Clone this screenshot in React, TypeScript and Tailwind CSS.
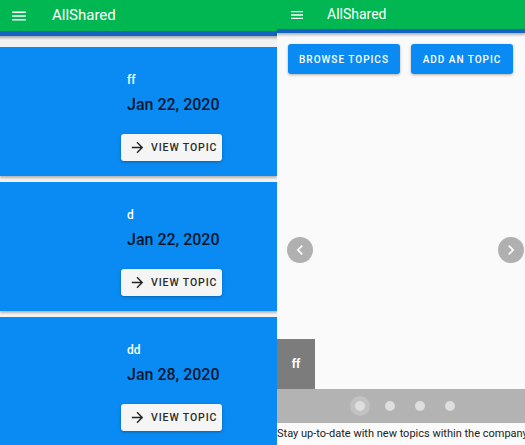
import React from 'react';

const topics = [
  { title: 'ff', date: 'Jan 22, 2020' },
  { title: 'd', date: 'Jan 22, 2020' },
  { title: 'dd', date: 'Jan 28, 2020' },
];

function MenuIcon({ size }: { size: number }) {
  return (
    <svg width={size} height={size} viewBox="0 0 24 24" fill="white">
      <path d="M3 18h18v-2H3v2zm0-5h18v-2H3v2zm0-7v2h18V6H3z" />
    </svg>
  );
}

function ArrowIcon() {
  return (
    <svg width="17" height="17" viewBox="0 0 24 24" fill="#222">
      <path d="M12 4l-1.41 1.41L16.17 11H4v2h12.17l-5.58 5.59L12 20l8-8z" />
    </svg>
  );
}

function TopicCard({ title, date }: { title: string; date: string }) {
  return (
    <div className="h-[129px] shrink-0 bg-[#0a8bf3] shadow-[0_2px_2px_rgba(0,0,0,0.25)] pl-[121px] pt-[25px]">
      <div className="pl-[6px] text-[12px] leading-[16px] font-medium text-white">{title}</div>
      <div className="pl-[6px] mt-[5px] text-[16px] leading-[24px] font-medium text-black/85">{date}</div>
      <button className="mt-[17px] flex h-[27px] w-[101px] items-center gap-[5px] rounded-[3px] bg-[#f5f5f5] pl-[8px] shadow-[0_1px_3px_rgba(0,0,0,0.3)]">
        <ArrowIcon />
        <span className="text-[10.5px] font-medium tracking-[0.9px] text-[#2a2a2a]">VIEW TOPIC</span>
      </button>
    </div>
  );
}

function Chevron({ dir }: { dir: 'left' | 'right' }) {
  return (
    <div className="flex h-[26px] w-[26px] items-center justify-center rounded-full bg-[#b0b0b0]">
      <svg width="20" height="20" viewBox="0 0 24 24" fill="white">
        {dir === 'left' ? (
          <path d="M15.41 7.41L14 6l-6 6 6 6 1.41-1.41L10.83 12z" />
        ) : (
          <path d="M10 6L8.59 7.41 13.17 12l-4.58 4.59L10 18l6-6z" />
        )}
      </svg>
    </div>
  );
}

function Dot({ active }: { active?: boolean }) {
  return (
    <div
      className={
        active
          ? 'flex h-[20px] w-[20px] items-center justify-center rounded-full bg-white/20'
          : 'flex h-[20px] w-[20px] items-center justify-center'
      }
    >
      <div className="h-[10px] w-[10px] rounded-full bg-[#dedede]" />
    </div>
  );
}

export default function App() {
  return (
    <div className="flex h-[445px] w-[525px] overflow-hidden bg-[#f2f2f2] font-['Roboto',sans-serif]">
      {/* Left: topic list */}
      <div className="flex w-[277px] shrink-0 flex-col overflow-hidden">
        <div className="flex h-[31px] shrink-0 items-center bg-[#00b751] pl-[10px]">
          <MenuIcon size={18} />
          <span className="ml-[24px] text-[15px] text-white">AllShared</span>
        </div>
        <div className="h-[5px] shrink-0 bg-[#1463c4]" />
        <div className="h-[4px] shrink-0 bg-gradient-to-b from-[#a8a8a8] to-[#f2f2f2]" />
        <div className="mt-[7px] flex flex-col gap-[6px]">
          {topics.map((t) => (
            <TopicCard key={t.title} title={t.title} date={t.date} />
          ))}
        </div>
      </div>

      {/* Right: home panel */}
      <div className="flex min-w-0 flex-1 flex-col bg-[#fafafa]">
        <div className="flex h-[29px] shrink-0 items-center bg-[#00b751] pl-[12px]">
          <MenuIcon size={16} />
          <span className="ml-[22px] text-[14px] text-white">AllShared</span>
        </div>
        <div className="h-[4px] shrink-0 bg-[#1463c4] shadow-[0_2px_3px_rgba(0,0,0,0.3)]" />
        <div className="flex gap-[11px] pl-[11px] pt-[11px]">
          <button className="h-[30px] w-[112px] rounded-[3px] bg-[#0a8bf3] text-[10px] font-medium tracking-[1px] text-white shadow-[0_1px_3px_rgba(0,0,0,0.3)]">
            BROWSE TOPICS
          </button>
          <button className="h-[30px] w-[102px] rounded-[3px] bg-[#0a8bf3] text-[10px] font-medium tracking-[1px] text-white shadow-[0_1px_3px_rgba(0,0,0,0.3)]">
            ADD AN TOPIC
          </button>
        </div>
        <div className="flex flex-1 flex-col">
          <div className="mt-[163px] flex justify-between pl-[10px] pr-[1px]">
            <Chevron dir="left" />
            <Chevron dir="right" />
          </div>
          <div className="flex-1" />
          <div className="flex h-[50px] w-[38px] items-center justify-center bg-[#7c7c7c] text-[12px] font-bold text-white">
            ff
          </div>
        </div>
        <div className="flex h-[34px] shrink-0 items-center gap-[10px] bg-[#b3b3b3] pl-[73px]">
          <Dot active />
          <Dot />
          <Dot />
          <Dot />
        </div>
        <div className="h-[22px] shrink-0 overflow-hidden whitespace-nowrap text-[11px] leading-[22px] text-[#222]">
          Stay up-to-date with new topics within the company
        </div>
      </div>
    </div>
  );
}
